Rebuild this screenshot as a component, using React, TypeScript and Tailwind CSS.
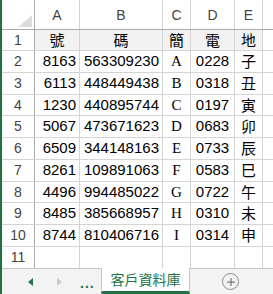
import { Plus } from 'lucide-react';

const cols = ['A', 'B', 'C', 'D', 'E'];
const widths = ['w-[45px]', 'w-[83px]', 'w-[28px]', 'w-[44px]', 'w-[28px]'];

const rows = [
  ['8163', '563309230', 'A', '0228', '子'],
  ['6113', '448449438', 'B', '0318', '丑'],
  ['1230', '440895744', 'C', '0197', '寅'],
  ['5067', '473671623', 'D', '0683', '卯'],
  ['6509', '344148163', 'E', '0733', '辰'],
  ['8261', '109891063', 'F', '0583', '巳'],
  ['4496', '994485022', 'G', '0722', '午'],
  ['8485', '385668957', 'H', '0310', '未'],
  ['8744', '810406716', 'I', '0314', '申'],
];

const heights = ['h-[22px]', 'h-[22px]', 'h-[21px]', 'h-[22px]', 'h-[22px]', 'h-[22px]', 'h-[21px]', 'h-[22px]', 'h-[22px]', 'h-[22px]'];

const num = "font-['Liberation_Sans',sans-serif] text-[15px]";
const cjk = "font-['Noto_Sans_CJK_TC',sans-serif] text-[15px]";
const serif = "font-['Liberation_Serif',serif] text-[15px]";

export default function App() {
  return (
    <div className="w-[273px] h-[294px] bg-white border-l-2 border-[#217346] flex flex-col overflow-hidden text-black">
      {/* column headers */}
      <div className="flex h-[30px] border-b border-[#ababab] font-['Liberation_Sans',sans-serif] text-[14px] text-[#444]">
        <div className="w-[33px] border-r border-[#ababab] relative">
          <svg className="absolute right-[2px] bottom-[2px]" width="14" height="12" viewBox="0 0 14 12">
            <polygon points="14,0 14,12 0,12" fill="#dcdcdc" />
          </svg>
        </div>
        {cols.map((c, i) => (
          <div key={c} className={`${widths[i]} border-r border-[#d4d4d4] flex items-center justify-center pt-[1px]`}>{c}</div>
        ))}
        <div className="flex-1" />
      </div>

      {/* row 1 */}
      <div className="flex h-[21px] border-b border-[#d4d4d4]">
        <RowHead n={1} />
        <div className={`w-[45px] bg-[#f2f2f2] border-r border-[#d4d4d4] flex items-center justify-center ${cjk}`}>號</div>
        <div className={`w-[83px] bg-[#f2f2f2] border-r border-[#d4d4d4] flex items-center justify-center ${cjk}`}>碼</div>
        <div className={`w-[28px] bg-[#f2f2f2] border-r border-[#d4d4d4] flex items-center justify-center ${cjk}`}>簡</div>
        <div className={`w-[44px] bg-[#f2f2f2] border-r border-[#d4d4d4] flex items-center justify-center ${cjk}`}>電</div>
        <div className={`w-[28px] bg-[#f2f2f2] border-r border-[#d4d4d4] flex items-center justify-center ${cjk}`}>地</div>
        <div className="flex-1" />
      </div>

      {rows.map((r, i) => (
        <div key={i} className={`flex ${heights[i]} border-b border-[#d4d4d4]`}>
          <RowHead n={i + 2} />
          <div className={`w-[45px] border-r border-[#d4d4d4] flex items-center justify-end pr-[3px] ${num}`}>{r[0]}</div>
          <div className={`w-[83px] border-r border-[#d4d4d4] flex items-center justify-end pr-[3px] ${num}`}>{r[1]}</div>
          <div className={`w-[28px] border-r border-[#d4d4d4] flex items-center justify-center ${serif}`}>{r[2]}</div>
          <div className={`w-[44px] border-r border-[#d4d4d4] flex items-center justify-center ${num}`}>{r[3]}</div>
          <div className={`w-[28px] border-r border-[#d4d4d4] flex items-center justify-center ${cjk}`}>{r[4]}</div>
          <div className="flex-1" />
        </div>
      ))}

      {/* row 11 */}
      <div className="flex h-[21px]">
        <RowHead n={11} />
        <div className="w-[45px] border-r border-[#d4d4d4]" />
        <div className="w-[83px] border-r border-[#d4d4d4]" />
        <div className="w-[28px] border-r border-[#d4d4d4]" />
        <div className="w-[44px] border-r border-[#d4d4d4]" />
        <div className="w-[28px] border-r border-[#d4d4d4]" />
        <div className="flex-1" />
      </div>

      {/* sheet tabs */}
      <div className="flex flex-1 bg-[#f3f3f3]">
        <div className="w-[99px] border-t border-[#c6c6c6] flex items-center">
          <svg className="ml-[25px]" width="8" height="10" viewBox="0 0 8 10">
            <polygon points="6,1 6,9 1,5" fill="#217346" />
          </svg>
          <svg className="ml-[20px]" width="8" height="10" viewBox="0 0 8 10">
            <polygon points="2,1 2,9 7,5" fill="#c8c8c8" />
          </svg>
          <span className="ml-[17px] mt-[4px] font-['Liberation_Sans',sans-serif] text-[14px] font-bold tracking-[1px] text-[#217346]">...</span>
        </div>
        <div className="w-[89px] bg-white border-x border-[#c6c6c6] border-b-[3px] border-b-[#217346] flex items-center justify-center font-['Noto_Sans_CJK_TC',sans-serif] text-[14px] text-[#217346]">
          客戶資料庫
        </div>
        <div className="flex-1 border-t border-[#c6c6c6] flex items-center pl-[32px]">
          <div className="w-[17px] h-[17px] rounded-full border-[1.5px] border-[#8a8a8a] flex items-center justify-center">
            <Plus size={12} strokeWidth={2.5} color="#7a7a7a" />
          </div>
        </div>
      </div>
    </div>
  );
}

function RowHead({ n }: { n: number }) {
  return (
    <div className="w-[33px] border-r border-[#ababab] flex items-center justify-center font-['Liberation_Sans',sans-serif] text-[14px] text-[#444]">
      {n}
    </div>
  );
}
